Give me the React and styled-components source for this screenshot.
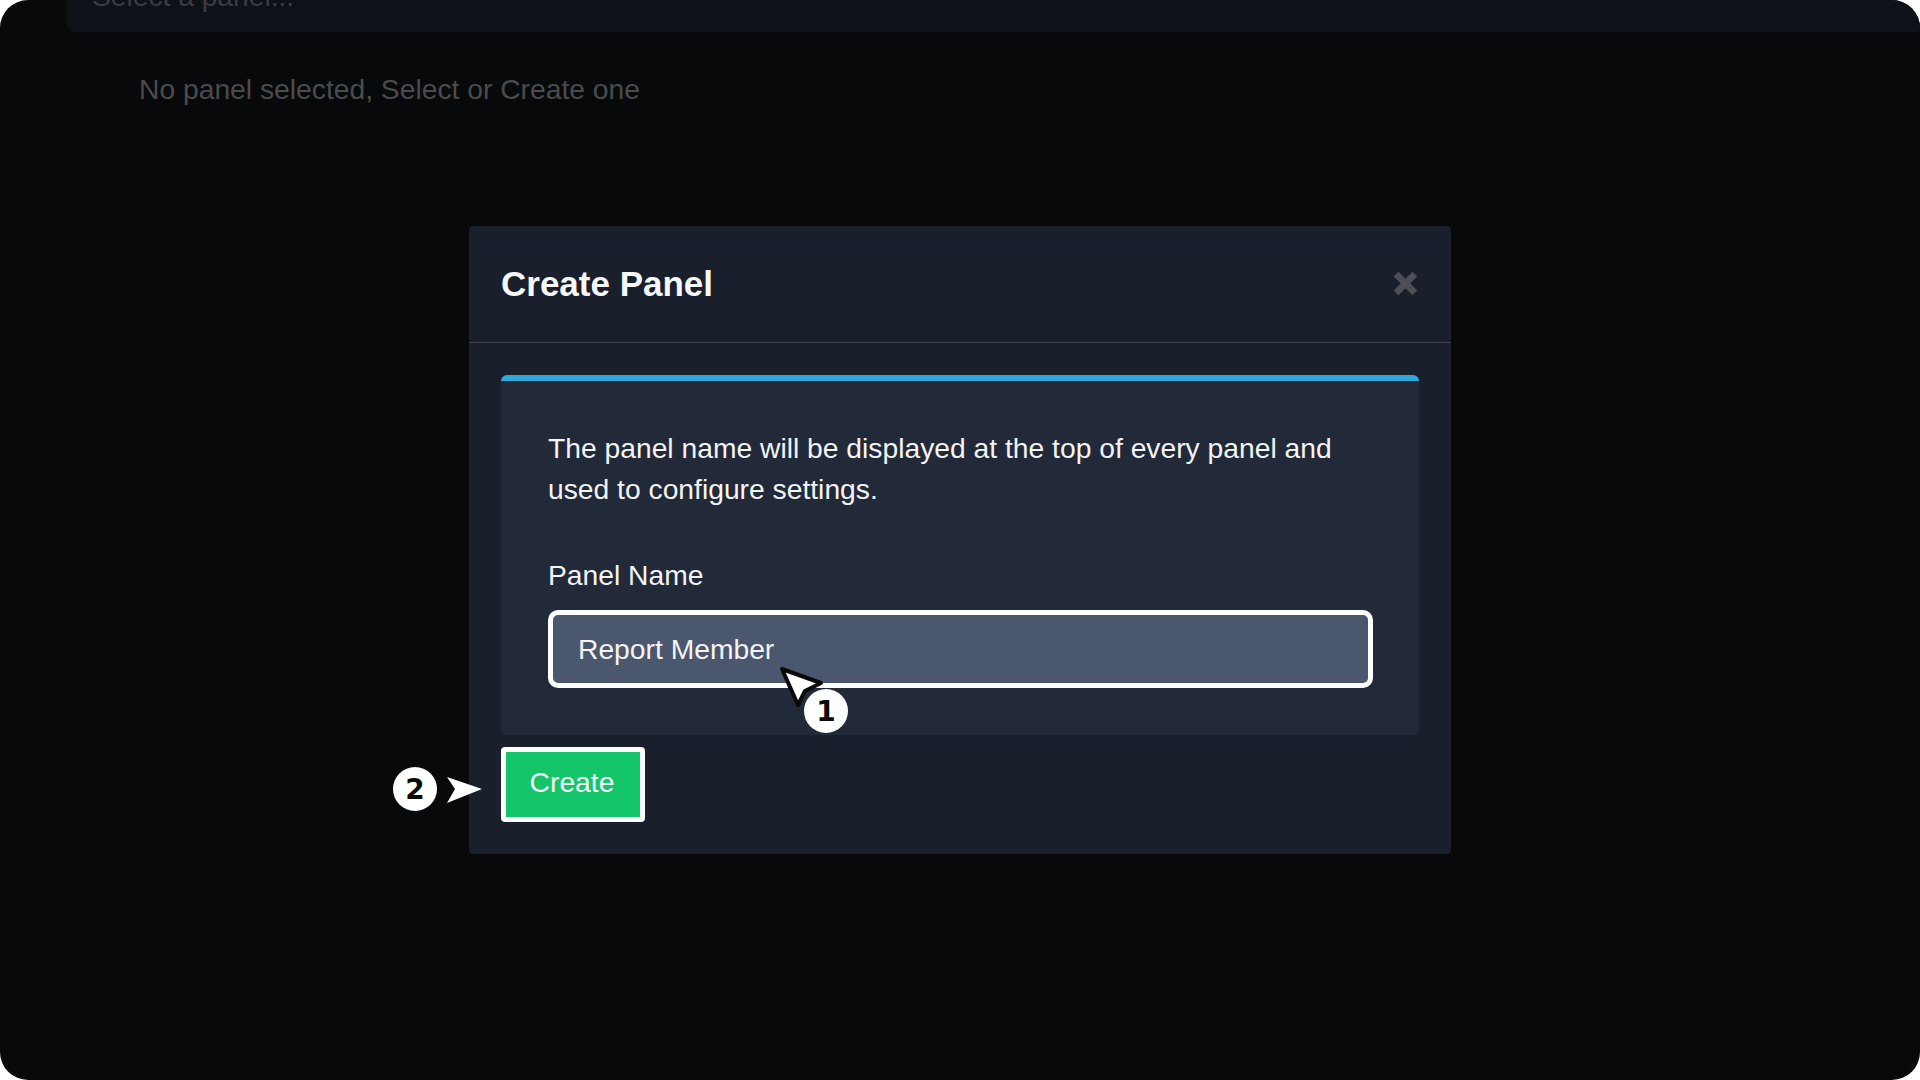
import React from "react";
import styled, { createGlobalStyle } from "styled-components";

const GlobalStyle = createGlobalStyle`
  html, body {
    margin: 0;
    padding: 0;
    background: #fff;
  }
  * {
    box-sizing: border-box;
  }
`;

const Page = styled.div`
  position: relative;
  width: 1920px;
  height: 1080px;
  overflow: hidden;
  border-radius: 28px;
  background: #08090b;
  font-family: "Liberation Sans", Arial, sans-serif;
`;

const TopBar = styled.div`
  height: 32px;
  margin-left: 67px;
  padding-left: 25px;
  border-radius: 0 0 0 8px;
  background: #0e1118;
  overflow: hidden;
  display: flex;
  align-items: flex-end;
`;

const TopBarText = styled.div`
  color: #3a3c40;
  font-size: 28.2px;
  line-height: 32px;
  margin-bottom: 20px;
  white-space: nowrap;
`;

const EmptyNote = styled.p`
  margin: 40px 0 0 139px;
  color: #4a4b4d;
  font-size: 28.25px;
  line-height: 34px;
`;

const Overlay = styled.div`
  position: absolute;
  inset: 0;
  display: flex;
  align-items: center;
  justify-content: center;
`;

const Modal = styled.div`
  width: 982px;
  border-radius: 4px;
  background: #1a202b;
`;

const ModalHeader = styled.div`
  height: 117px;
  padding: 0 32px;
  display: flex;
  align-items: center;
  justify-content: space-between;
  border-bottom: 1px solid #3d424b;
`;

const Title = styled.h2`
  margin: 0;
  color: #f7f8f9;
  font-size: 35px;
  font-weight: 700;
`;

const CloseIcon = styled.svg`
  width: 25px;
  height: 25px;
  margin: 0 1px 2px 0;
  color: #4c5056;
`;

const ModalBody = styled.div`
  padding: 32px 32px 32px;
`;

const InfoPanel = styled.div`
  padding: 47px 46px 47px 47px;
  border-top: 6px solid #2fa9d9;
  border-radius: 6px;
  background: #222938;
`;

const Description = styled.p`
  margin: 0 0 48px;
  color: #f3f4f6;
  font-size: 28.25px;
  line-height: 41px;
`;

const FieldLabel = styled.label`
  display: block;
  margin-bottom: 18px;
  color: #f3f4f6;
  font-size: 28.25px;
  line-height: 34px;
`;

const NameInput = styled.div`
  height: 78px;
  padding: 0 25px;
  display: flex;
  align-items: center;
  border: 5px solid #fff;
  border-radius: 10px;
  background: #4b576c;
  color: #f3f4f6;
  font-size: 28.25px;
`;

const CreateButton = styled.button`
  display: block;
  width: 144px;
  height: 75px;
  margin-top: 12px;
  padding: 0 2px 4px 0;
  border: 5px solid #fff;
  border-radius: 4px;
  background: #14c56a;
  color: #f4fdf8;
  font-family: inherit;
  font-size: 28.25px;
`;

const Badge = styled.div`
  position: absolute;
  left: ${(p) => p.$x - 22}px;
  top: ${(p) => p.$y - 22}px;
  width: 44px;
  height: 44px;
  border-radius: 50%;
  background: #fff;
  color: #0a0a0a;
  display: flex;
  align-items: center;
  justify-content: center;
  font-family: "DejaVu Sans", sans-serif;
  font-size: 28px;
  font-weight: 700;
`;

const Pointer = styled.svg`
  position: absolute;
  left: ${(p) => p.$x}px;
  top: ${(p) => p.$y}px;
  overflow: visible;
`;

const App = () => (
  <Page>
    <GlobalStyle />
    <TopBar>
      <TopBarText>Select a panel...</TopBarText>
    </TopBar>
    <EmptyNote>No panel selected, Select or Create one</EmptyNote>
    <Overlay>
      <Modal>
        <ModalHeader>
          <Title>Create Panel</Title>
          <CloseIcon viewBox="0 0 24 24">
            <path
              d="M3 3 L21 21 M21 3 L3 21"
              stroke="currentColor"
              strokeWidth="6.5"
              fill="none"
            />
          </CloseIcon>
        </ModalHeader>
        <ModalBody>
          <InfoPanel>
            <Description>
              The panel name will be displayed at the top of every panel and
              used to configure settings.
            </Description>
            <FieldLabel>Panel Name</FieldLabel>
            <NameInput>Report Member</NameInput>
          </InfoPanel>
          <CreateButton>Create</CreateButton>
        </ModalBody>
      </Modal>
    </Overlay>
    {/* step annotations */}
    <Pointer $x={781} $y={668} width="42" height="40" viewBox="0 0 42 40">
      <path
        d="M1 1 L40 15 L24 23 L17 37 Z"
        fill="#fff"
        stroke="#0a0a0a"
        strokeWidth="4"
        strokeLinejoin="round"
      />
    </Pointer>
    <Badge $x={826} $y={711}>1</Badge>
    <Pointer $x={447} $y={777} width="36" height="26" viewBox="0 0 36 26">
      <path d="M0 0 L35 12 L0 26 L8 12 Z" fill="#fff" />
    </Pointer>
    <Badge $x={415} $y={789}>2</Badge>
  </Page>
);

export default App;
